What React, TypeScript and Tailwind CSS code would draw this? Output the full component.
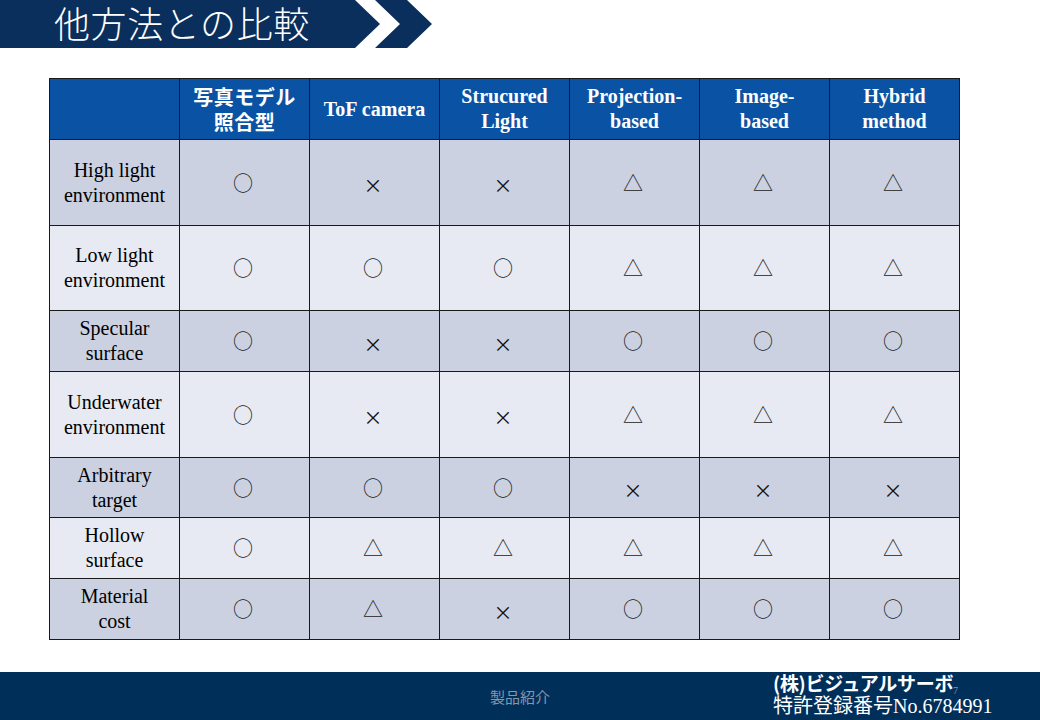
import React from "react";

const serif = { fontFamily: '"Liberation Serif", "Times New Roman", serif' };
const cjk = { fontFamily: '"Noto Sans CJK JP", "Liberation Serif", sans-serif' };

const headers: string[][] = [
  [],
  ["写真モデル", "照合型"],
  ["ToF camera"],
  ["Strucured", "Light"],
  ["Projection-", "based"],
  ["Image-", "based"],
  ["Hybrid", "method"],
];

type Row = { label: string[]; vals: string[]; dark: boolean };

const rows: Row[] = [
  { label: ["High light", "environment"], vals: ["○", "×", "×", "△", "△", "△"], dark: true },
  { label: ["Low light", "environment"], vals: ["○", "○", "○", "△", "△", "△"], dark: false },
  { label: ["Specular", "surface"], vals: ["○", "×", "×", "○", "○", "○"], dark: true },
  { label: ["Underwater", "environment"], vals: ["○", "×", "×", "△", "△", "△"], dark: false },
  { label: ["Arbitrary", "target"], vals: ["○", "○", "○", "×", "×", "×"], dark: true },
  { label: ["Hollow", "surface"], vals: ["○", "△", "△", "△", "△", "△"], dark: false },
  { label: ["Material", "cost"], vals: ["○", "△", "×", "○", "○", "○"], dark: true },
];

function Symbol({ s }: { s: string }) {
  if (s === "×") {
    return (
      <span className="text-[19px] leading-none text-[#111] pt-[4px] pr-[3px]" style={cjk}>
        ×
      </span>
    );
  }
  return (
    <span className="text-[20px] leading-none text-[#222] pr-[3px]" style={cjk}>
      {s}
    </span>
  );
}

export default function App() {
  return (
    <div className="w-[1040px] h-[720px] bg-white flex flex-col overflow-hidden relative">
      {/* Title banner */}
      <div className="flex h-[48px]">
        <div className="w-[380px] h-[48px] bg-[#0b2f5c] [clip-path:polygon(0_0,355px_0,380px_24px,355px_48px,0_48px)] flex items-center pl-[54px] pb-[4px]">
          <span className="text-white text-[36px] leading-[40px] tracking-[0.6px] font-light" style={cjk}>
            他方法との比較
          </span>
        </div>
        <div className="ml-[-5px] w-[57px] h-[48px] bg-[#0b2f5c] [clip-path:polygon(0_0,32px_0,57px_24px,32px_48px,0_48px,25px_24px)]" />
      </div>

      {/* Comparison table */}
      <div className="mt-[30px] ml-[49px] w-[911px] grid grid-cols-[repeat(7,129px)] grid-rows-[60px_85px_84px_60px_85px_59px_60px_60px] gap-px p-px bg-[#1a1a1a]">
        {headers.map((h, i) => (
          <div key={"h" + i} className="bg-[#0a53a4] flex flex-col items-center justify-center text-white font-bold">
            {h.map((line, j) => (
              <span
                key={j}
                className={i === 1 ? "text-[20px] leading-[25px] tracking-[0.5px]" : "text-[20px] leading-[25px]"}
                style={i === 1 ? cjk : serif}
              >
                {line}
              </span>
            ))}
          </div>
        ))}
        {rows.map((r, ri) => (
          <React.Fragment key={"r" + ri}>
            <div className={(r.dark ? "bg-[#cbd1e1]" : "bg-[#e7eaf2]") + " flex flex-col items-center justify-center text-black"}>
              {r.label.map((l, j) => (
                <span key={j} className="text-[20px] leading-[25px]" style={serif}>
                  {l}
                </span>
              ))}
            </div>
            {r.vals.map((v, vi) => (
              <div key={vi} className={(r.dark ? "bg-[#cbd1e1]" : "bg-[#e7eaf2]") + " flex items-center justify-center"}>
                <Symbol s={v} />
              </div>
            ))}
          </React.Fragment>
        ))}
      </div>

      {/* Footer */}
      <div className="mt-auto h-[48px] bg-[#002f5a] grid grid-cols-[1fr_auto_1fr] relative">
        <div />
        <div className="flex items-center pt-[1px]">
          <span className="text-[15px] text-[#8796ab] leading-none" style={cjk}>
            製品紹介
          </span>
        </div>
        <div className="flex flex-col pl-[223px]">
          <span className="text-white text-[19px] leading-[21px] font-bold whitespace-nowrap tracking-[-0.3px]" style={cjk}>
            (株)ビジュアルサーボ
          </span>
          <span className="text-white text-[20px] leading-[24px] whitespace-nowrap" style={cjk}>
            特許登録番号<span style={serif}>No.6784991</span>
          </span>
        </div>
        <span className="absolute left-[953px] top-[14px] text-[10px] leading-none text-[#8796ab]" style={serif}>
          7
        </span>
      </div>
    </div>
  );
}
